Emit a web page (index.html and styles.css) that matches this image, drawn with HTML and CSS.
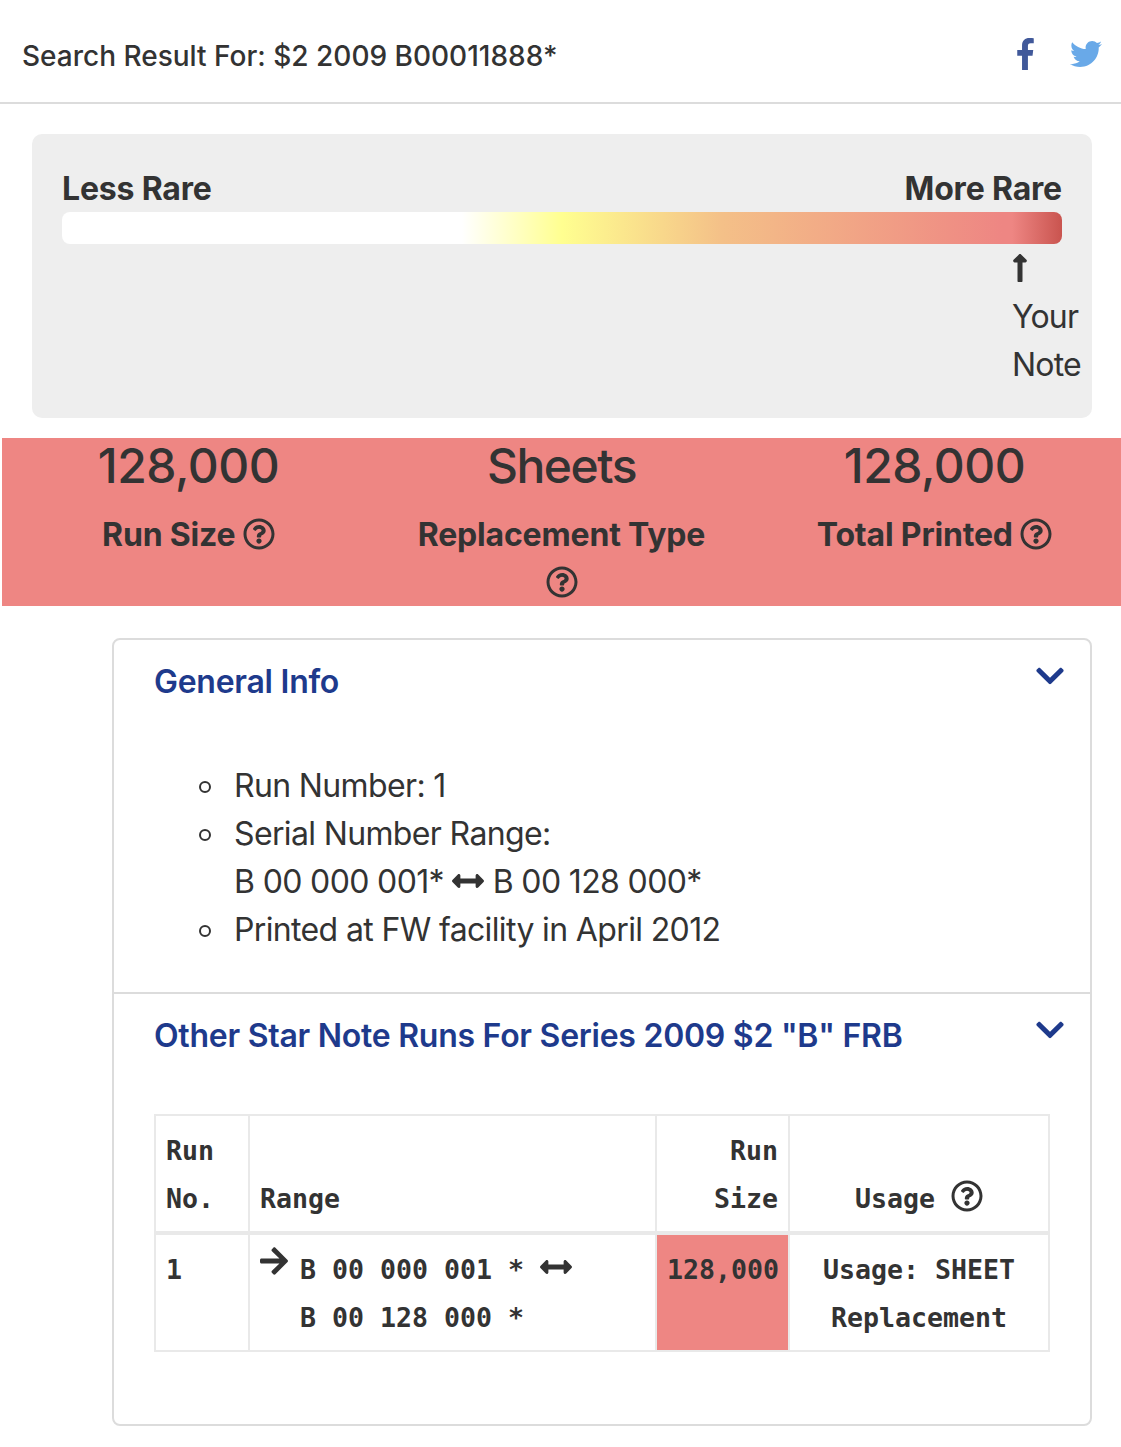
FILE: index.html
```html
<!DOCTYPE html>
<html lang="en">
<head>
    <meta charset="utf-8">
    <title>Star Note Lookup</title>
    <link rel="stylesheet" href="styles.css">
</head>
<body>
    <svg class="sprite" xmlns="http://www.w3.org/2000/svg">
        <symbol id="facebook" viewBox="0 0 264 512"><path d="M215.8 85H264V3.6C255.7 2.5 227.1 0 193.8 0 124.3 0 76.7 42.4 76.7 120.3V192H0v91h76.7v229h94V283h73.6l11.7-91h-85.3v-62.7c0-26.3 7.3-44.3 45.1-44.3z"/></symbol>
        <symbol id="twitter" viewBox="0 0 512 512"><path d="M459.37 151.716c.325 4.548.325 9.097.325 13.645 0 138.72-105.583 298.558-298.558 298.558-59.452 0-114.68-17.219-161.137-47.106 8.447.974 16.568 1.299 25.34 1.299 49.055 0 94.213-16.568 130.274-44.832-46.132-.975-84.792-31.188-98.112-72.772 6.498.974 12.995 1.624 19.818 1.624 9.421 0 18.843-1.3 27.614-3.573-48.081-9.747-84.143-51.98-84.143-102.985v-1.299c13.969 7.797 30.214 12.67 47.431 13.319-28.264-18.843-46.781-51.005-46.781-87.391 0-19.492 5.197-37.36 14.294-52.954 51.655 63.675 129.3 105.258 216.365 109.807-1.624-7.797-2.599-15.918-2.599-24.04 0-57.828 46.782-104.934 104.934-104.934 30.213 0 57.502 12.67 76.67 33.137 23.715-4.548 46.456-13.32 66.599-25.34-7.798 24.366-24.366 44.833-46.132 57.827 21.117-2.273 41.584-8.122 60.426-16.243-14.292 20.791-32.161 39.308-52.628 54.253z"/></symbol>
        <symbol id="arrow-up" viewBox="0 0 256 512"><path d="M88 166.059V468c0 6.627 5.373 12 12 12h56c6.627 0 12-5.373 12-12V166.059h46.059c21.382 0 32.09-25.851 16.971-40.971l-86.059-86.059c-9.373-9.373-24.569-9.373-33.941 0l-86.059 86.059c-15.119 15.119-4.411 40.971 16.971 40.971H88z"/></symbol>
        <symbol id="arrows-h" viewBox="0 0 512 512"><path d="M377.941 169.941V216H134.059v-46.059c0-21.382-25.851-32.09-40.971-16.971L7.029 239.029c-9.373 9.373-9.373 24.568 0 33.941l86.059 86.059c15.119 15.119 40.971 4.411 40.971-16.971V296h243.882v46.059c0 21.382 25.851 32.09 40.971 16.971l86.059-86.059c9.373-9.373 9.373-24.568 0-33.941l-86.059-86.059c-15.119-15.12-40.971-4.412-40.971 16.97z"/></symbol>
        <symbol id="chevron" viewBox="0 0 448 512"><path d="M207.029 381.476L12.686 187.132c-9.373-9.373-9.373-24.569 0-33.941l22.667-22.667c9.357-9.357 24.522-9.375 33.901-.04L224 284.505l154.745-154.021c9.379-9.335 24.544-9.317 33.901.04l22.667 22.667c9.373 9.373 9.373 24.569 0 33.941L240.971 381.476c-9.373 9.372-24.569 9.372-33.942 0z"/></symbol>
        <symbol id="arrow-right" viewBox="0 0 448 512"><path d="M190.5 66.9l22.2-22.2c9.4-9.4 24.6-9.4 33.9 0L441 239c9.4 9.4 9.4 24.6 0 33.9L246.6 467.3c-9.4 9.4-24.6 9.4-33.9 0l-22.2-22.2c-9.5-9.5-9.3-25 .4-34.3L311.4 296H24c-13.3 0-24-10.7-24-24v-32c0-13.3 10.7-24 24-24h287.4L190.9 101.2c-9.8-9.3-10-24.8-.4-34.3z"/></symbol>
        <symbol id="question" viewBox="0 0 512 512"><path d="M256 8C119.043 8 8 119.083 8 256c0 136.997 111.043 248 248 248s248-111.003 248-248C504 119.083 392.957 8 256 8zm0 448c-110.532 0-200-89.431-200-200 0-110.495 89.472-200 200-200 110.491 0 200 89.471 200 200 0 110.53-89.431 200-200 200zm107.244-255.2c0 67.052-72.421 68.084-72.421 92.863V300c0 6.627-5.373 12-12 12h-45.647c-6.627 0-12-5.373-12-12v-8.659c0-35.745 27.1-50.034 47.579-61.516 17.561-9.845 28.324-16.541 28.324-29.579 0-17.246-21.999-28.693-39.784-28.693-23.189 0-33.894 10.977-48.942 29.969-4.057 5.12-11.46 6.071-16.666 2.124l-27.824-21.098c-5.107-3.872-6.251-11.066-2.644-16.363C184.846 131.491 214.94 112 261.794 112c49.071 0 101.45 38.304 101.45 88.8zM298 368c0 23.159-18.841 42-42 42s-42-18.841-42-42 18.841-42 42-42 42 18.841 42 42z"/></symbol>
    </svg>

    <header class="result-header">
        <div class="result-title">Search Result For: $2 2009 B00011888*</div>
        <div class="share">
            <svg class="icon facebook"><use href="#facebook"/></svg>
            <svg class="icon twitter"><use href="#twitter"/></svg>
        </div>
    </header>

    <section class="rarity">
        <div class="rarity-labels">
            <span>Less Rare</span>
            <span>More Rare</span>
        </div>
        <div class="rarity-bar"></div>
        <div class="your-note" style="margin-left: 95%">
            <div class="note-arrow"><svg class="icon half"><use href="#arrow-up"/></svg></div>
            Your<br>Note
        </div>
    </section>

    <section class="stats">
        <div class="stat">
            <div class="value">128,000</div>
            <div class="label">Run Size <svg class="icon"><use href="#question"/></svg></div>
        </div>
        <div class="stat">
            <div class="value word">Sheets</div>
            <div class="label">Replacement Type <svg class="icon"><use href="#question"/></svg></div>
        </div>
        <div class="stat">
            <div class="value">128,000</div>
            <div class="label">Total Printed <svg class="icon"><use href="#question"/></svg></div>
        </div>
    </section>

    <div class="accordion">
        <section class="panel">
            <div class="panel-title">
                <h2>General Info</h2>
                <svg class="icon narrow"><use href="#chevron"/></svg>
            </div>
            <ul class="info">
                <li>Run Number: 1</li>
                <li>Serial Number Range:<br>
                    B 00 000 001* <svg class="icon"><use href="#arrows-h"/></svg> B 00 128 000*</li>
                <li>Printed at FW facility in April 2012</li>
            </ul>
        </section>
        <section class="panel">
            <div class="panel-title">
                <h2>Other Star Note Runs For Series 2009 $2 "B" FRB</h2>
                <svg class="icon narrow"><use href="#chevron"/></svg>
            </div>
            <table class="runs">
                <colgroup>
                    <col class="col-no">
                    <col class="col-range">
                    <col class="col-size">
                    <col class="col-usage">
                </colgroup>
                <thead>
                    <tr>
                        <th>Run No.</th>
                        <th>Range</th>
                        <th class="right">Run Size</th>
                        <th class="center">Usage <svg class="icon"><use href="#question"/></svg></th>
                    </tr>
                </thead>
                <tbody>
                    <tr>
                        <td>1</td>
                        <td>
                            <div class="range">
                                <svg class="icon narrow"><use href="#arrow-right"/></svg>
                                <div>B 00 000 001 * <svg class="icon"><use href="#arrows-h"/></svg><br>B 00 128 000 *</div>
                            </div>
                        </td>
                        <td class="right rare">128,000</td>
                        <td class="center">Usage: SHEET Replacement</td>
                    </tr>
                </tbody>
            </table>
        </section>
    </div>
</body>
</html>
```
FILE: styles.css
```css
* {
    box-sizing: border-box;
}

body {
    margin: 0;
    background-color: #fff;
    color: #333;
    font-family: Inter, "Liberation Sans", sans-serif;
    font-size: 32px;
    line-height: 48px;
}

.sprite {
    display: none;
}

.icon {
    width: 32px;
    height: 32px;
    fill: currentColor;
    vertical-align: -4px;
}

.icon.half {
    width: 16px;
}

.icon.narrow {
    width: 28px;
}

.result-header {
    display: flex;
    justify-content: space-between;
    height: 104px;
    padding: 32px 19px 0 22px;
    border-bottom: 2px solid #dcdcdc;
}

.result-title {
    font-size: 28px;
    font-weight: 450;
    line-height: 49px;
}

.share {
    display: flex;
    gap: 36px;
    padding-top: 6px;
}

.icon.facebook {
    width: 17px;
    color: #41599a;
}

.icon.twitter {
    color: #69a9e8;
}

.rarity {
    margin: 30px 29px 20px 32px;
    padding: 30px 30px 29px;
    background-color: #eee;
    border-radius: 10px;
}

.rarity-labels {
    display: flex;
    justify-content: space-between;
    height: 48px;
    font-weight: 700;
    letter-spacing: -0.18px;
    line-height: 50px;
}

.rarity-bar {
    height: 32px;
    border-radius: 8px;
    background: linear-gradient(to right, #fff 0%, #fff 40%, #ffff90 50%, #f4c088 66%, #ee8683 94%, #ee8683 95%, #c9544f 100%);
}

.your-note {
    letter-spacing: -0.8px;
}

.note-arrow {
    height: 49px;
    padding-top: 8px;
    line-height: 0;
}

.stats {
    display: grid;
    grid-template-columns: repeat(3, 1fr);
    height: 168px;
    margin-left: 2px;
    background-color: #ee8683;
    text-align: center;
}

.stat {
    padding: 0 30px;
}

.value {
    margin-bottom: 17px;
    font-size: 48px;
    font-weight: 500;
    letter-spacing: -0.5px;
    line-height: 56px;
}

.value.word {
    letter-spacing: -1.5px;
}

.label {
    font-weight: 700;
    letter-spacing: -0.18px;
}

.accordion {
    margin: 32px 29px 0 112px;
    border: 2px solid #dcdcdc;
    border-radius: 8px;
}

.panel {
    padding: 16px 40px 38px;
}

.panel + .panel {
    height: 432px;
    border-top: 2px solid #dcdcdc;
}

.panel-title {
    display: flex;
    justify-content: space-between;
    margin-right: -14px;
    color: #1e3a8c;
}

.panel-title .icon {
    margin-top: 4px;
}

h2 {
    margin: 0;
    font-size: 32px;
    font-weight: 600;
    letter-spacing: -0.26px;
    line-height: 52px;
    white-space: nowrap;
}

.info {
    margin: 54px 0 0;
    padding-left: 80px;
    letter-spacing: -0.64px;
    list-style: none;
}

.info li::before {
    content: "";
    display: inline-block;
    width: 8px;
    height: 8px;
    margin: 0 23px 0 -35px;
    border: 2px solid #333;
    border-radius: 50%;
    vertical-align: 4px;
}

.runs {
    width: 896px;
    margin-top: 52px;
    border-collapse: collapse;
    table-layout: fixed;
    font-family: "DejaVu Sans Mono", monospace;
    font-size: 26.58px;
    font-weight: bold;
}

.col-no {
    width: 94px;
}

.col-range {
    width: 407px;
}

.col-size {
    width: 133px;
}

.col-usage {
    width: 260px;
}

.runs th,
.runs td {
    padding: 10.5px 10px 8.5px;
    border: 2px solid #e9e9e9;
    text-align: left;
    vertical-align: top;
}

.runs th {
    border-bottom-width: 4px;
    vertical-align: bottom;
}

.runs .right {
    text-align: right;
}

.runs .center {
    text-align: center;
}

.runs .rare {
    background-color: #ee8683;
}

.range {
    display: flex;
    gap: 12px;
}

.range .icon.narrow {
    margin-top: -1px;
}
```
